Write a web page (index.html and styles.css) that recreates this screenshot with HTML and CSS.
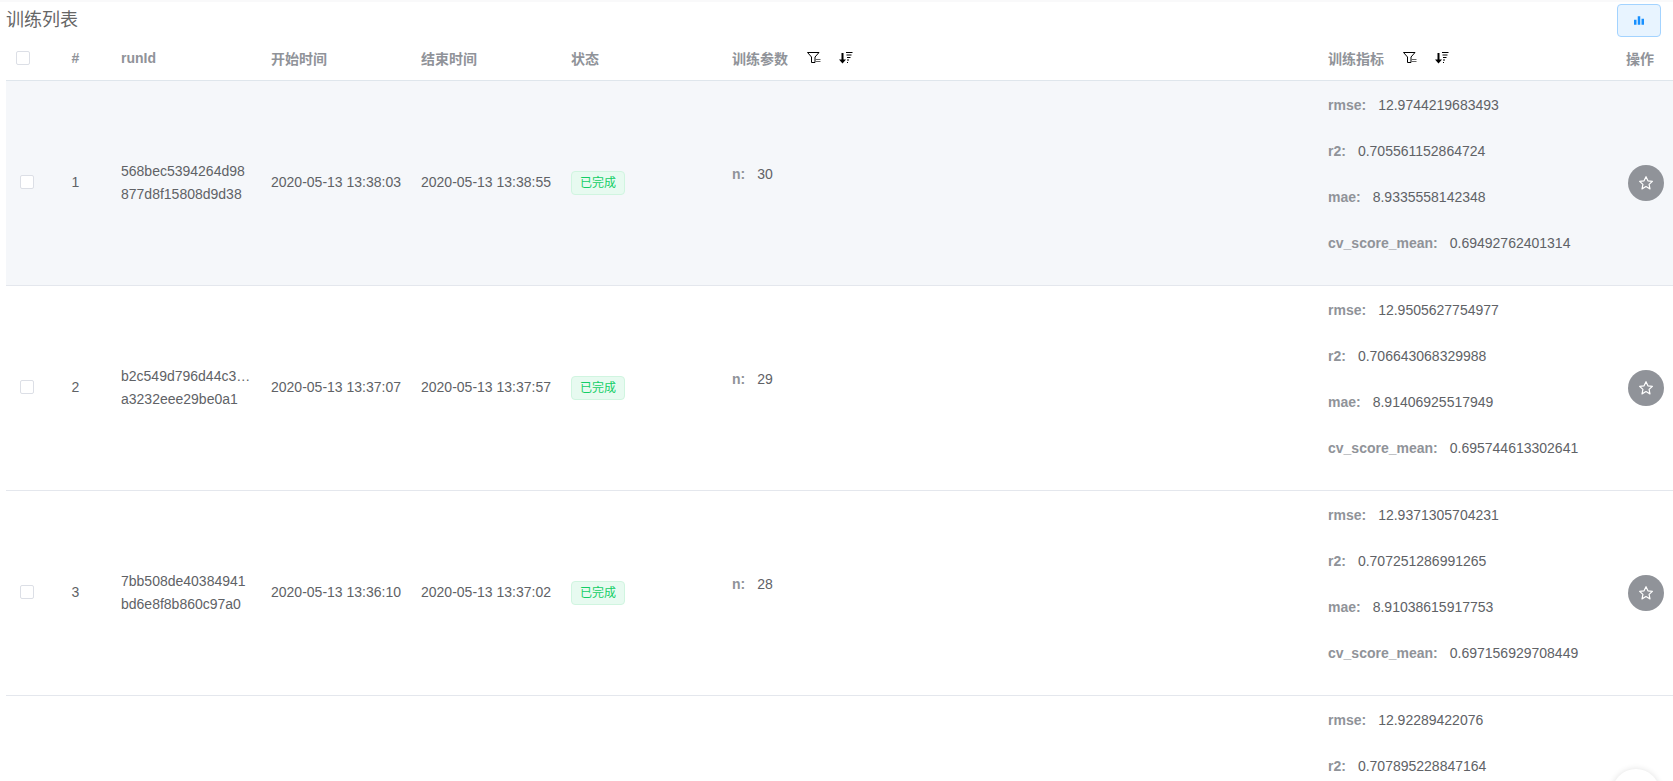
FILE: index.html
```html
<!DOCTYPE html>
<html lang="zh-CN">
<head>
    <meta charset="UTF-8">
    <title>训练列表</title>
    <link rel="stylesheet" href="styles.css">
</head>
<body>
    <div class="toolbar">
        <span class="page-title">训练列表</span>
        <button class="chart-btn" type="button">
            <svg viewBox="0 0 12 10" width="10" height="9"><path d="M0 4h3v6H0zM4.500 0h3v10h-3zM9 3h3v7H9z" fill="#1890ff"/></svg>
        </button>
    </div>
    <table class="run-table">
        <colgroup>
            <col class="col-select"><col class="col-index"><col class="col-id"><col class="col-time"><col class="col-time">
            <col class="col-status"><col class="col-params"><col class="col-metrics"><col class="col-action">
        </colgroup>
        <thead>
            <tr>
                <th class="head-check"><span class="checkbox"></span></th>
                <th class="center">#</th>
                <th>runId</th>
                <th>开始时间</th>
                <th>结束时间</th>
                <th>状态</th>
                <th>
                    <div class="head-tools">训练参数
                        <svg class="tool-icon tool-filter" viewBox="0 0 14 12"><use href="#icon-filter"/></svg>
                        <svg class="tool-icon tool-sort" viewBox="0 0 14 12"><use href="#icon-sort"/></svg>
                    </div>
                </th>
                <th>
                    <div class="head-tools">训练指标
                        <svg class="tool-icon tool-filter" viewBox="0 0 14 12"><use href="#icon-filter"/></svg>
                        <svg class="tool-icon tool-sort" viewBox="0 0 14 12"><use href="#icon-sort"/></svg>
                    </div>
                </th>
                <th>操作</th>
            </tr>
        </thead>
        <tbody>
            <tr class="is-hover">
                <td class="cell-check"><span class="checkbox"></span></td>
                <td class="center">1</td>
                <td><div class="run-id">568bec5394264d98877d8f15808d9d38</div></td>
                <td class="cell-time">2020-05-13 13:38:03</td>
                <td class="cell-time">2020-05-13 13:38:55</td>
                <td><span class="tag">已完成</span></td>
                <td><p class="param"><b>n:</b>30</p></td>
                <td class="cell-metrics">
                    <p class="metric"><b>rmse:</b>12.9744219683493</p>
                    <p class="metric"><b>r2:</b>0.705561152864724</p>
                    <p class="metric"><b>mae:</b>8.9335558142348</p>
                    <p class="metric"><b>cv_score_mean:</b>0.69492762401314</p>
                </td>
                <td class="cell-action"><button class="star-btn" type="button"><svg viewBox="0 0 24 24" width="16" height="16"><use href="#icon-star"/></svg></button></td>
            </tr>
            <tr>
                <td class="cell-check"><span class="checkbox"></span></td>
                <td class="center">2</td>
                <td><div class="run-id"><span class="clip">b2c549d796d44c3…</span>a3232eee29be0a1</div></td>
                <td class="cell-time">2020-05-13 13:37:07</td>
                <td class="cell-time">2020-05-13 13:37:57</td>
                <td><span class="tag">已完成</span></td>
                <td><p class="param"><b>n:</b>29</p></td>
                <td class="cell-metrics">
                    <p class="metric"><b>rmse:</b>12.9505627754977</p>
                    <p class="metric"><b>r2:</b>0.706643068329988</p>
                    <p class="metric"><b>mae:</b>8.91406925517949</p>
                    <p class="metric"><b>cv_score_mean:</b>0.695744613302641</p>
                </td>
                <td class="cell-action"><button class="star-btn" type="button"><svg viewBox="0 0 24 24" width="16" height="16"><use href="#icon-star"/></svg></button></td>
            </tr>
            <tr>
                <td class="cell-check"><span class="checkbox"></span></td>
                <td class="center">3</td>
                <td><div class="run-id">7bb508de40384941bd6e8f8b860c97a0</div></td>
                <td class="cell-time">2020-05-13 13:36:10</td>
                <td class="cell-time">2020-05-13 13:37:02</td>
                <td><span class="tag">已完成</span></td>
                <td><p class="param"><b>n:</b>28</p></td>
                <td class="cell-metrics">
                    <p class="metric"><b>rmse:</b>12.9371305704231</p>
                    <p class="metric"><b>r2:</b>0.707251286991265</p>
                    <p class="metric"><b>mae:</b>8.91038615917753</p>
                    <p class="metric"><b>cv_score_mean:</b>0.697156929708449</p>
                </td>
                <td class="cell-action"><button class="star-btn" type="button"><svg viewBox="0 0 24 24" width="16" height="16"><use href="#icon-star"/></svg></button></td>
            </tr>
            <tr>
                <td class="cell-check"></td>
                <td></td><td></td><td></td><td></td><td></td><td></td>
                <td class="cell-metrics">
                    <p class="metric"><b>rmse:</b>12.92289422076</p>
                    <p class="metric"><b>r2:</b>0.707895228847164</p>
                </td>
                <td class="cell-action"><span class="star-white"></span></td>
            </tr>
        </tbody>
    </table>

    <svg class="icon-defs" width="0" height="0">
        <symbol id="icon-filter" viewBox="0 0 14 12">
            <path d="M.5 .5H12L8 5V10.500H4.500V5z" fill="none" stroke="#000" stroke-width="1"/>
            <path d="M8.500 7.500H13.500M8.500 9.500H13.500" stroke="#666" stroke-width="1"/>
        </symbol>
        <symbol id="icon-sort" viewBox="0 0 14 12">
            <path d="M2.500 1h2v6.500H7L3.500 11.500 0 7.500h2.500z" fill="#000"/>
            <path d="M7 .5h6.500M7.500 3h5M8 5.500h3.500M8 8h2M8 10.500h1" stroke="#000" stroke-width="1"/>
        </symbol>
        <symbol id="icon-star" viewBox="0 0 24 24">
            <path d="M12 2.500l2.900 6.200 6.700.8-5 4.600 1.400 6.700L12 17.400l-6 3.400 1.400-6.700-5-4.600 6.700-.8z" fill="none" stroke="#fff" stroke-width="1.800" stroke-linejoin="round"/>
        </symbol>
    </svg>
</body>
</html>
```

FILE: styles.css
```css
* {
    box-sizing: border-box;
}

html, body {
    height: 781px;
    overflow: hidden;
}

body {
    margin: 0;
    padding: 2px 0 0 6px;
    background: #fff;
    color: #606266;
    font-family: "Liberation Sans", "Noto Sans CJK SC", sans-serif;
    font-size: 14px;
    border-top: 2px solid #f9f9fa;
}

.toolbar {
    display: flex;
    justify-content: space-between;
    align-items: flex-start;
    height: 33px;
    padding-right: 12px;
}

.page-title {
    font-size: 18px;
    line-height: 32px;
    color: #666;
}

.chart-btn {
    display: flex;
    align-items: center;
    justify-content: center;
    flex: none;
    width: 44px;
    height: 33px;
    padding: 0;
    background: #e8f4ff;
    border: 1px solid #a3d3ff;
    border-radius: 4px;
}

.run-table {
    width: 1667px;
    table-layout: fixed;
    border-collapse: collapse;
}

.col-select { width: 34px; }
.col-index { width: 71px; }
.col-id { width: 150px; }
.col-time { width: 150px; }
.col-status { width: 161px; }
.col-params { width: 596px; }
.col-metrics { width: 298px; }
.col-action { width: 57px; }

th, td {
    padding: 0 10px;
    text-align: left;
}

th {
    height: 43px;
    color: #909399;
    font-weight: bold;
    border-bottom: 1px solid #dfe6ec;
}

td {
    height: 205px;
    border-bottom: 1px solid #e4e7ed;
    vertical-align: middle;
}

.is-hover td {
    background: #f5f7fa;
}

th.center, td.center {
    text-align: center;
}

td.center, .cell-time {
    padding-bottom: 2px;
}

.head-check, .cell-check {
    padding: 0;
}

.head-check {
    padding-left: 10px;
}

.cell-check {
    padding: 0 0 2px 14px;
    overflow: visible;
}

.checkbox {
    display: block;
    width: 14px;
    height: 14px;
    background: #fff;
    border: 1px solid #dcdfe6;
    border-radius: 2px;
}

.run-id {
    line-height: 23px;
    word-break: break-all;
}

.clip {
    display: block;
    white-space: nowrap;
}

.tag {
    display: inline-block;
    height: 24px;
    padding: 0 8px;
    line-height: 22px;
    font-size: 12px;
    color: #13ce66;
    background: #e7faf0;
    border: 1px solid #d0f5e0;
    border-radius: 4px;
}

.head-tools {
    display: flex;
    align-items: center;
}

.tool-icon {
    width: 14px;
    height: 12px;
}

.tool-filter {
    margin-left: 19px;
}

.tool-sort {
    margin-left: 18px;
}

.param, .metric {
    margin: 0;
    line-height: 23px;
}

.param {
    margin-bottom: 16px;
}

.cell-metrics {
    padding-top: 13px;
    padding-bottom: 7px;
    vertical-align: top;
}

.metric {
    margin-bottom: 23px;
}

.param b, .metric b {
    margin-right: 12px;
    color: #909399;
}

.cell-action {
    padding: 0 0 0 12px;
    position: relative;
}

.star-btn {
    display: flex;
    align-items: center;
    justify-content: center;
    width: 36px;
    height: 36px;
    padding: 0;
    background: #909399;
    border: none;
    border-radius: 50%;
}

.star-white {
    position: absolute;
    left: -4px;
    top: 73px;
    width: 48px;
    height: 48px;
    background: #fff;
    border-radius: 50%;
    box-shadow: 0 0 6px rgba(0, 0, 0, 0.12);
}

.icon-defs {
    position: absolute;
}
```
